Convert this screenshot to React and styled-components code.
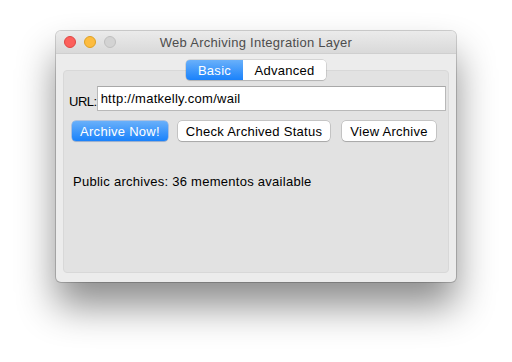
import React from "react";
import styled, { createGlobalStyle } from "styled-components";

const Global = createGlobalStyle`
  html, body { margin: 0; padding: 0; background: #ffffff; }
  body { font-family: "Liberation Sans", Arial, sans-serif; font-size: 13px; letter-spacing: 0.27px; color: #000; }
`;

const Page = styled.div`
  padding: 31px 0 0 56px;
  width: 512px;
  height: 362px;
  box-sizing: border-box;
`;

const Window = styled.div`
  width: 400px;
  height: 251px;
  border-radius: 5px;
  background: #ececec;
  box-shadow: 0 0 0 1px rgba(0, 0, 0, 0.18), 0 24px 38px rgba(0, 0, 0, 0.45);
  display: flex;
  flex-direction: column;
  overflow: hidden;
`;

const TitleBar = styled.div`
  height: 22px;
  flex: none;
  background: linear-gradient(#ebebeb, #d9d9d9);
  border-bottom: 1px solid #cfcfcf;
  display: grid;
  grid-template-columns: 1fr auto 1fr;
  align-items: center;
  padding: 0 8px;
`;

const Lights = styled.div`
  display: flex;
  gap: 8px;
`;

const Light = styled.span`
  width: 12px;
  height: 12px;
  border-radius: 50%;
  box-sizing: border-box;
  background: ${(p) => p.$c};
  border: 0.5px solid ${(p) => p.$b};
`;

const Title = styled.div`
  color: #4d4d4d;
  font-size: 13px;
`;

const Content = styled.div`
  flex: 1;
  display: flex;
  flex-direction: column;
  padding: 6px 7px 9px;
`;

const Segmented = styled.div`
  align-self: center;
  display: flex;
  height: 20px;
  margin-bottom: -10px;
  position: relative;
  z-index: 1;
  border-radius: 4px;
  box-shadow: 0 0 0 0.5px rgba(0, 0, 0, 0.2), 0 1px 1px rgba(0, 0, 0, 0.12);
  overflow: hidden;
`;

const Seg = styled.div`
  width: ${(p) => p.$w}px;
  display: flex;
  align-items: center;
  justify-content: center;
  font-size: 13px;
  color: ${(p) => (p.$on ? "#fff" : "#000")};
  background: ${(p) => (p.$on ? "linear-gradient(#69b0fa, #1a82fb)" : "#fff")};
`;

const Box = styled.div`
  flex: 1;
  background: #e2e2e2;
  border: 1px solid #d8d8d8;
  border-radius: 4px;
  padding: 15px 2px 0 5px;
  display: flex;
  flex-direction: column;
`;

const UrlRow = styled.div`
  display: flex;
  align-items: center;
`;

const Label = styled.span`
  flex: none;
  font-size: 13px;
  letter-spacing: -0.5px;
  padding-top: 5px;
  white-space: nowrap;
`;

const Input = styled.div`
  flex: 1;
  height: 25px;
  box-sizing: border-box;
  background: #fff;
  border: 1px solid #b8b8b8;
  border-top-color: #a8a8a8;
  padding: 0 3px;
  display: flex;
  align-items: center;
  font-size: 13px;
`;

const Buttons = styled.div`
  display: flex;
  margin: 10px 0 0 3px;
`;

const Button = styled.div`
  height: 20px;
  width: ${(p) => p.$w}px;
  margin-right: ${(p) => p.$gap || 0}px;
  box-sizing: border-box;
  border-radius: 4px;
  display: flex;
  align-items: center;
  justify-content: center;
  font-size: 13px;
  color: ${(p) => (p.$primary ? "#fff" : "#000")};
  background: ${(p) => (p.$primary ? "linear-gradient(#69b0fa, #1a82fb)" : "#fff")};
  box-shadow: ${(p) =>
    p.$primary
      ? "0 0 0 0.5px rgba(20, 100, 220, 0.5), 0 1px 1px rgba(0,0,0,0.12)"
      : "0 0 0 0.5px rgba(0, 0, 0, 0.25), 0 1px 1px rgba(0,0,0,0.15)"};
`;

const Status = styled.div`
  margin: 33px 0 0 4px;
  font-size: 13px;
`;

export default function App() {
  return (
    <Page>
      <Global />
      <Window>
        <TitleBar>
          <Lights>
            <Light $c="#fc605c" $b="#de4643" />
            <Light $c="#fdbc40" $b="#dea123" />
            <Light $c="#d3d3d3" $b="#bfbfbf" />
          </Lights>
          <Title>Web Archiving Integration Layer</Title>
          <div />
        </TitleBar>
        <Content>
          <Segmented>
            <Seg $on $w={57}>Basic</Seg>
            <Seg $w={83}>Advanced</Seg>
          </Segmented>
          <Box>
            <UrlRow>
              <Label>URL:</Label>
              <Input>http://matkelly.com/wail</Input>
            </UrlRow>
            <Buttons>
              <Button $primary $w={96} $gap={10}>Archive Now!</Button>
              <Button $w={152} $gap={12}>Check Archived Status</Button>
              <Button $w={94}>View Archive</Button>
            </Buttons>
            <Status>Public archives: 36 mementos available</Status>
          </Box>
        </Content>
      </Window>
    </Page>
  );
}
